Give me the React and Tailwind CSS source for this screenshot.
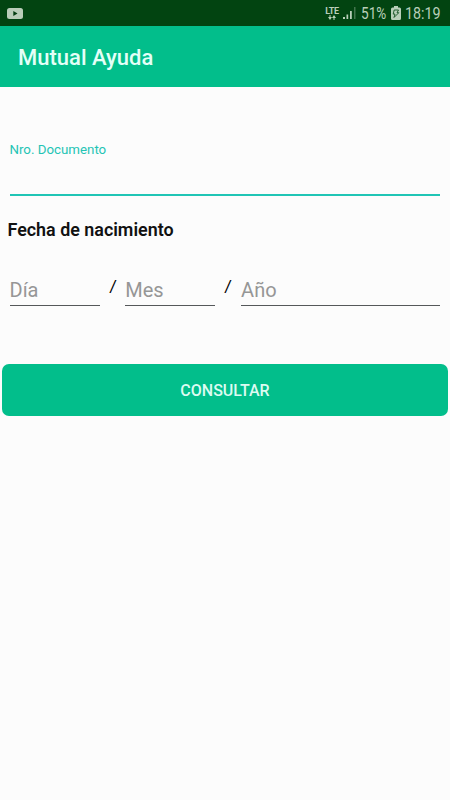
function StatusBar() {
  return (
    <div className="flex h-[26px] items-center bg-[#024411] text-[#b9cfb9]">
      <svg className="ml-[7px] h-[11px] w-4" viewBox="0 0 16 11">
        <rect width="16" height="11" rx="2.5" fill="#b9cdb9" />
        <path d="M6.3 3v5l4.2-2.5z" fill="#033d10" />
      </svg>
      <div className="ml-[302px] flex w-[14px] flex-col items-center">
        <span className="text-[9px] leading-[8px] font-bold tracking-[-0.4px]">LTE</span>
        <svg className="h-[5px] w-2" viewBox="0 0 8 5" fill="currentColor">
          <path d="M1.5 0h1v2H4L2 5 0 2h1.5zM5.5 5h1V3H8L6 0 4 3h1.5z" />
        </svg>
      </div>
      <svg className="ml-1 h-3 w-[13px]" viewBox="0 0 13 12" fill="currentColor">
        <path d="M0 10h2v2H0zM3.5 7.5h1.7V12H3.5zM7 4h1.8v8H7z" />
        <path d="M11 0h1.5v12H11z" opacity=".35" />
      </svg>
      <span className="ml-[5px] w-[26px] origin-left scale-x-[0.8] pt-px text-[17px] leading-none whitespace-nowrap">51%</span>
      <svg className="ml-1 h-[14px] w-[10px]" viewBox="0 0 10 14">
        <path d="M3 0h4v1.5h1.5Q10 1.5 10 3v9.5q0 1.5-1.5 1.5h-7Q0 14 0 12.5V3q0-1.5 1.5-1.5H3z" fill="#b9cfb9" />
        <path d="M3.2 4h4.3L6 6.7h1.8L3 11.5l1-3.4H2.2z" fill="none" stroke="#024411" strokeWidth=".8" />
      </svg>
      <span className="ml-1 w-[36px] origin-left scale-x-[0.84] pt-px text-[17px] leading-none whitespace-nowrap">18:19</span>
    </div>
  );
}

function DateField({ label, className }) {
  return (
    <div className={`h-[31px] border-b border-[#55585a] text-[20px] leading-[31px] text-[#969696] ${className}`}>
      {label}
    </div>
  );
}

function Slash() {
  return (
    <span className="w-[25.8px] -skew-x-3 text-center text-[17px] leading-[22px] text-black">/</span>
  );
}

export default function App() {
  return (
    <div className="flex h-[800px] w-[450px] flex-col overflow-hidden bg-[#fcfcfc] font-['Roboto','Liberation_Sans',sans-serif]">
      <StatusBar />
      <header className="flex h-[61px] items-center bg-[#02be8b] pt-[2px] pl-[18px]">
        <h1 className="text-[22px] leading-none font-medium text-[#e4fff7]">Mutual Ayuda</h1>
      </header>
      <main className="flex flex-col">
        <div className="mr-[10px] ml-[9.5px] mt-[53px] h-[56px] border-b-2 border-[#20c5b5]">
          <label className="block text-[13.3px] leading-[20px] text-[#24c4b5]">Nro. Documento</label>
        </div>
        <h2 className="mt-[23px] ml-[7.5px] text-[17.9px] leading-[22px] font-semibold text-[#111]">Fecha de nacimiento</h2>
        <div className="mt-[34px] mr-[10px] ml-[9.5px] flex">
          <DateField label="Día" className="w-[90px]" />
          <Slash />
          <DateField label="Mes" className="w-[90px]" />
          <Slash />
          <DateField label="Año" className="flex-1" />
        </div>
        <button className="mx-[2px] mt-[58px] h-[52px] rounded-[7px] bg-[#02be8b] pt-[2px] text-[16px] font-medium text-[#dcfbf1]">
          CONSULTAR
        </button>
      </main>
    </div>
  );
}
